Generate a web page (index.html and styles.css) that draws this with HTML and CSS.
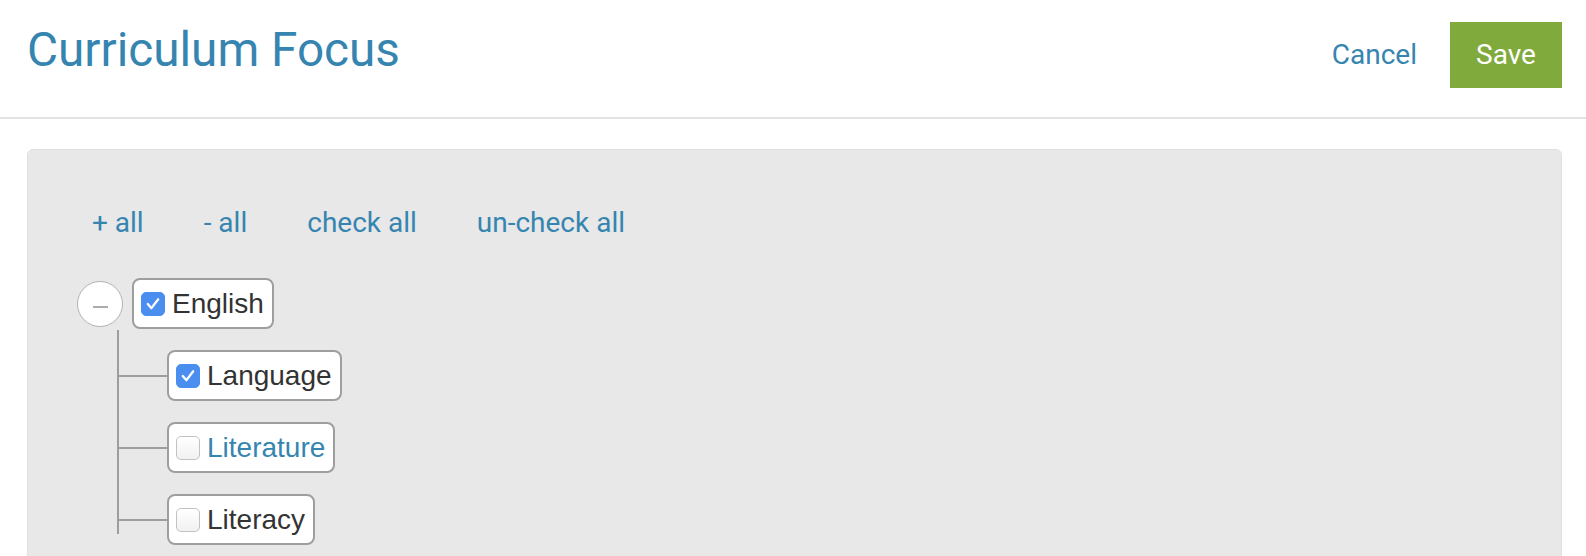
FILE: index.html
```html
<!DOCTYPE html>
<html>
<head>
<meta charset="utf-8">
<link rel="stylesheet" href="styles.css">
</head>
<body>
<header class="header">
  <h1 class="title">Curriculum Focus</h1>
  <div class="actions">
    <a class="cancel">Cancel</a>
    <button class="save">Save</button>
  </div>
</header>
<section class="panel">
  <nav class="links">
    <a>+ all</a>
    <a>- all</a>
    <a>check all</a>
    <a>un-check all</a>
  </nav>
  <div class="tree">
    <div class="root-row">
      <span class="toggle"><span class="minus"></span></span>
      <label class="node">
        <span class="cb checked"><svg viewBox="0 0 23 23" width="23" height="23"><polyline points="6.5,11.5 10,15.5 16.5,7" fill="none" stroke="#fff" stroke-width="2.2" stroke-linecap="round" stroke-linejoin="round"/></svg></span>
        <span class="label">English</span>
      </label>
    </div>
    <div class="children">
      <div class="child">
        <label class="node">
          <span class="cb checked"><svg viewBox="0 0 23 23" width="23" height="23"><polyline points="6.5,11.5 10,15.5 16.5,7" fill="none" stroke="#fff" stroke-width="2.2" stroke-linecap="round" stroke-linejoin="round"/></svg></span>
          <span class="label">Language</span>
        </label>
      </div>
      <div class="child">
        <label class="node">
          <span class="cb"></span>
          <span class="label hl">Literature</span>
        </label>
      </div>
      <div class="child">
        <label class="node">
          <span class="cb"></span>
          <span class="label">Literacy</span>
        </label>
      </div>
    </div>
  </div>
</section>
</body>
</html>
```
FILE: styles.css
```css
* { box-sizing: border-box; }
html, body { margin: 0; padding: 0; background: #fff; }
body {
  font-family: Roboto, "Liberation Sans", sans-serif;
  overflow: hidden;
  height: 556px;
}
.header {
  display: flex;
  justify-content: space-between;
  align-items: flex-start;
  padding: 22px 24px 29px 27px;
  border-bottom: 2px solid #e3e3e3;
}
.title {
  margin: 2px 0 0;
  font-size: 47.7px;
  line-height: 52px;
  font-weight: 400;
  color: #3585b0;
}
.actions {
  display: flex;
  align-items: center;
  gap: 33px;
}
.cancel {
  font-size: 28px;
  line-height: 66px;
  color: #3585b0;
}
.save {
  border: 0;
  margin: 0;
  height: 66px;
  width: 112px;
  padding: 0;
  background: #80ab3c;
  color: #fff;
  font-family: Roboto, sans-serif;
  font-size: 28px;
  line-height: 66px;
}
.panel {
  margin: 30px 24px 0 27px;
  background: #e8e8e8;
  border: 1px solid #e0e0e0;
  border-radius: 6px;
  height: 460px;
  padding-top: 57px;
}
.links {
  display: flex;
  gap: 60px;
  margin-left: 64px;
  font-size: 28px;
  line-height: 32px;
  color: #3585b0;
}
.tree {
  margin: 39px 0 0 49px;
}
.root-row {
  display: flex;
  align-items: center;
  gap: 9px;
}
.toggle {
  width: 46px;
  height: 46px;
  border-radius: 50%;
  border: 1.5px solid #b2b2b2;
  background: #fff;
  display: flex;
  justify-content: center;
  align-items: center;
}
.minus {
  width: 15px;
  height: 2px;
  background: #acacac;
  margin-top: 6px;
}
.node {
  display: flex;
  align-items: center;
  height: 51px;
  padding: 0 8px 0 7px;
  background: #fff;
  border: 2px solid #9e9e9e;
  border-radius: 8px;
  gap: 7px;
}
.label {
  font-family: "Liberation Sans", Arial, sans-serif;
  font-size: 28px;
  color: #333;
  line-height: 30px;
}
.label.hl { color: #3585b0; }
.cb {
  width: 24px;
  height: 24px;
  border-radius: 5px;
  border: 1px solid #c2c2c2;
  background: linear-gradient(#fff, #f1f1f1);
  display: block;
}
.cb.checked {
  background: #4a8ff0;
  border-color: #4a8ff0;
}
.cb svg { display: block; margin: -1px; width: 24px; height: 24px; }
.children {
  margin-left: 40px;
  padding-top: 21px;
  display: flex;
  flex-direction: column;
  gap: 21px;
  background: linear-gradient(#9e9e9e, #9e9e9e) no-repeat 0 1px / 2px calc(100% - 12px);
}
.child {
  display: flex;
  align-items: center;
}
.child::before {
  content: "";
  width: 50px;
  height: 2px;
  background: #9e9e9e;
}
```
